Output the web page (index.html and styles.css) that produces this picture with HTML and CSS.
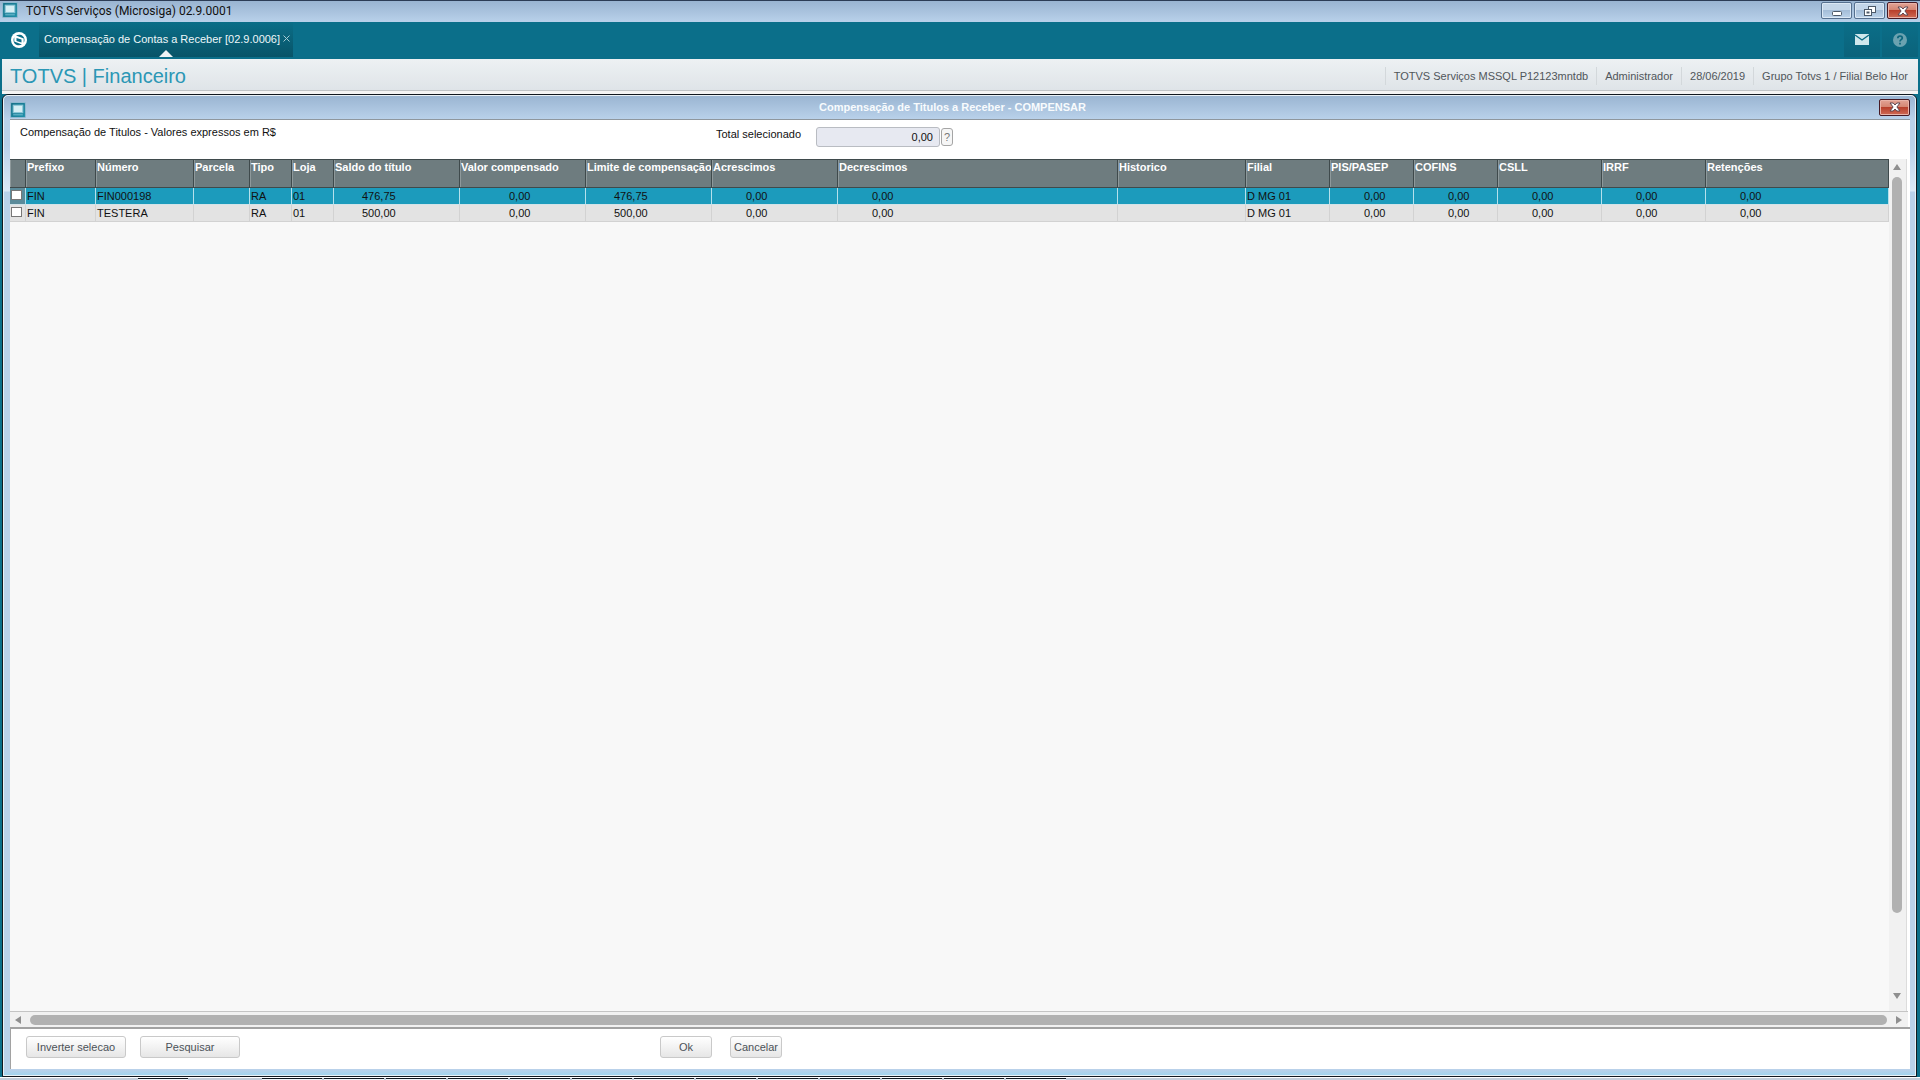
FILE: index.html
```html
<!doctype html>
<html lang="pt-BR">
  <head>
    <meta charset="UTF-8" />
    <meta name="viewport" content="width=device-width, initial-scale=1.0" />
    <title>TOTVS Serviços (Microsiga) 02.9.0001</title>
    <link rel="stylesheet" href="styles.css">
  </head>
  <body>
    <svg class="sprite" width="0" height="0">
      <defs>
        <linearGradient id="app-bg" x1="0" y1="0" x2="1" y2="1">
          <stop offset="0" stop-color="#166f88" />
          <stop offset="1" stop-color="#1f91aa" />
        </linearGradient>
        <symbol id="app" viewBox="0 0 15 15">
          <rect x="0.5" y="0.5" width="14" height="14" rx="1" fill="url(#app-bg)" stroke="#8fb9cf" />
          <rect x="3" y="3" width="9" height="7" fill="#d5eef4" stroke="#8ac6d6" />
          <path d="M3 12h9" stroke="#6fbccf" />
        </symbol>
        <symbol id="close" viewBox="0 0 12 10">
          <path d="M1 1h3.200L6 3l1.800-2H11L7.900 5 11 9H7.800L6 7 4.200 9H1l3.100-4z" fill="#fff" stroke="#5d4650" />
        </symbol>
      </defs>
    </svg>

    <header class="titlebar">
      <svg class="app-icon"><use href="#app" /></svg>
      <span class="titlebar-text">TOTVS Serviços (Microsiga) 02.9.0001</span>
      <div class="window-buttons">
        <button class="win" aria-label="Minimizar">
          <svg width="12" height="12" viewBox="0 0 12 12"><rect x="1.500" y="6.500" width="9" height="4" rx="1" fill="#fff" stroke="#4d5968" /></svg>
        </button>
        <button class="win" aria-label="Restaurar">
          <svg width="12" height="12" viewBox="0 0 12 12" fill="#fff" stroke="#4d5968">
            <rect x="4.500" y="1.500" width="7" height="6" />
            <rect x="0.500" y="4.500" width="7" height="6" />
            <rect x="3" y="7" width="2" height="1" />
          </svg>
        </button>
        <button class="win win-close" aria-label="Fechar"><svg width="12" height="10"><use href="#close" /></svg></button>
      </div>
    </header>

    <div class="frame">
      <nav class="tabs">
        <button class="logo" aria-label="Menu">
          <svg width="16" height="16" viewBox="0 0 16 16">
            <circle cx="8" cy="8" r="8" fill="#fff" />
            <path d="M5.500 6l5 1.500v3l-5-1.500z" fill="#0b6e88" />
            <path d="M5 3.500c4-2 8.500 0 8.500 4.500 0 1.200-.3 2-.8 2.800V6.500zM11 12.500c-4 2-8.500 0-8.500-4.500 0-1.200.3-2 .8-2.800v4.300z" fill="#0b6e88" />
          </svg>
        </button>
        <div class="tab">
          <a href="#">Compensação de Contas a Receber [02.9.0006]</a>
          <button class="tab-close" aria-label="Fechar aba">
            <svg width="7" height="7" viewBox="0 0 7 7"><path d="M.5.5l6 6M6.500.5l-6 6" stroke="#a5cbd3" /></svg>
          </button>
        </div>
        <div class="tools">
          <button class="tool" aria-label="Mensagens">
            <svg width="14" height="11" viewBox="0 0 14 11"><path d="M0 0h14v11H0z" fill="#cfe7ec" /><path d="M0 1l7 5 7-5" fill="none" stroke="#0a6b84" stroke-width="1.400" /></svg>
          </button>
          <button class="tool" aria-label="Ajuda">
            <svg width="14" height="14" viewBox="0 0 14 14"><circle cx="7" cy="7" r="7" fill="#6ba2b0" /><path d="M4.800 5.300c0-3 4.500-3 4.500-.3C9.300 6.700 7 6.600 7 8.500M7 9.700v1.800" fill="none" stroke="#0b657c" stroke-width="1.700" /></svg>
          </button>
        </div>
      </nav>

      <div class="module">
        <h1>TOTVS | Financeiro</h1>
        <ul class="session">
          <li>TOTVS Serviços MSSQL P12123mntdb</li>
          <li>Administrador</li>
          <li>28/06/2019</li>
          <li>Grupo Totvs 1 / Filial Belo Hor</li>
        </ul>
      </div>

      <main class="dialog">
        <div class="dialog-title">
          <svg class="app-icon"><use href="#app" /></svg>
          <h2>Compensação de Titulos a Receber - COMPENSAR</h2>
          <button class="win win-close" aria-label="Fechar janela"><svg width="12" height="10"><use href="#close" /></svg></button>
        </div>

        <div class="content">
          <div class="summary">
            <p>Compensação de Titulos - Valores expressos em R$</p>
            <label for="total">Total selecionado</label>
            <input id="total" class="total" type="text" value="0,00" readonly>
            <button class="help">?</button>
          </div>

          <div class="grid">
            <div class="grid-view">
              <table>
                <colgroup>
                  <col class="c-check"><col class="c-prefix"><col class="c-number"><col class="c-parcel">
                  <col class="c-short"><col class="c-short">
                  <col class="c-value"><col class="c-value"><col class="c-value"><col class="c-value">
                  <col class="c-dec"><col class="c-hist">
                  <col class="c-tax"><col class="c-tax"><col class="c-tax">
                  <col class="c-wide"><col class="c-wide"><col>
                </colgroup>
                <thead>
                  <tr>
                    <th></th>
                    <th>Prefixo</th>
                    <th>Número</th>
                    <th>Parcela</th>
                    <th>Tipo</th>
                    <th>Loja</th>
                    <th>Saldo do título</th>
                    <th>Valor compensado</th>
                    <th>Limite de compensação</th>
                    <th>Acrescimos</th>
                    <th>Decrescimos</th>
                    <th>Historico</th>
                    <th>Filial</th>
                    <th>PIS/PASEP</th>
                    <th>COFINS</th>
                    <th>CSLL</th>
                    <th>IRRF</th>
                    <th>Retenções</th>
                  </tr>
                </thead>
                <tbody>
                  <tr class="selected">
                    <td class="check"><input type="checkbox" aria-label="FIN000198"></td>
                    <td>FIN</td>
                    <td>FIN000198</td>
                    <td></td>
                    <td>RA</td>
                    <td>01</td>
                    <td class="amount">476,75</td>
                    <td class="comp">0,00</td>
                    <td class="amount">476,75</td>
                    <td class="zero">0,00</td>
                    <td class="zero">0,00</td>
                    <td></td>
                    <td>D MG 01</td>
                    <td class="zero">0,00</td>
                    <td class="zero">0,00</td>
                    <td class="zero">0,00</td>
                    <td class="zero">0,00</td>
                    <td class="zero">0,00</td>
                  </tr>
                  <tr>
                    <td class="check"><input type="checkbox" aria-label="TESTERA"></td>
                    <td>FIN</td>
                    <td>TESTERA</td>
                    <td></td>
                    <td>RA</td>
                    <td>01</td>
                    <td class="amount">500,00</td>
                    <td class="comp">0,00</td>
                    <td class="amount">500,00</td>
                    <td class="zero">0,00</td>
                    <td class="zero">0,00</td>
                    <td></td>
                    <td>D MG 01</td>
                    <td class="zero">0,00</td>
                    <td class="zero">0,00</td>
                    <td class="zero">0,00</td>
                    <td class="zero">0,00</td>
                    <td class="zero">0,00</td>
                  </tr>
                </tbody>
              </table>
            </div>
            <div class="vscroll">
              <svg width="8" height="6" viewBox="0 0 8 6"><path d="M4 0l4 6H0z" /></svg>
              <div class="track"><div class="thumb"></div></div>
              <svg width="8" height="6" viewBox="0 0 8 6"><path d="M4 6l4-6H0z" /></svg>
            </div>
          </div>

          <div class="hscroll">
            <svg width="6" height="8" viewBox="0 0 6 8"><path d="M0 4l6-4v8z" /></svg>
            <div class="thumb"></div>
            <svg width="6" height="8" viewBox="0 0 6 8"><path d="M6 4L0 0v8z" /></svg>
          </div>

          <div class="actions">
            <div class="group">
              <button class="btn wide">Inverter selecao</button>
              <button class="btn wide">Pesquisar</button>
            </div>
            <div class="group confirm">
              <button class="btn">Ok</button>
              <button class="btn">Cancelar</button>
            </div>
          </div>
        </div>
      </main>
    </div>

    <footer class="shelf">
      <i class="first"></i>
      <i></i><i></i><i></i><i></i><i></i><i></i><i></i><i></i><i></i><i></i><i></i><i></i><i></i>
    </footer>
  </body>
</html>
```
FILE: styles.css
```css
* {
  box-sizing: border-box;
}
body {
  margin: 0;
  height: 100vh;
  display: flex;
  flex-direction: column;
  overflow: hidden;
  background: #0b6f8a;
  color: #111;
  font: 11px/14px "Liberation Sans", Arial, sans-serif;
}
button, input {
  font: inherit;
  color: inherit;
  margin: 0;
  padding: 0;
}
button {
  display: flex;
  align-items: center;
  justify-content: center;
  border: 0;
  background: none;
}
h1, h2, p, ul {
  margin: 0;
  padding: 0;
  font-weight: normal;
}
.sprite {
  position: absolute;
}

/* window */
.titlebar {
  flex: none;
  display: flex;
  align-items: flex-start;
  height: 22px;
  padding: 1px 2px 0;
  border-top: 1px solid #2c3c55;
  background: linear-gradient(#99b4d1, #b9d1ea);
}
.app-icon {
  flex: none;
  width: 16px;
  height: 16px;
}
.titlebar-text {
  flex: 1;
  margin-left: 8px;
  font: 12px/18px Roboto, sans-serif;
}
.window-buttons {
  display: flex;
  gap: 2px;
}
.win {
  flex: none;
  width: 31px;
  height: 17px;
  border: 1px solid #56708f;
  border-radius: 2px;
  background: linear-gradient(#c4d6e9 45%, #a4bdd8 50%, #bcd3ea);
  box-shadow: inset 0 0 0 1px #dbe8f5;
}
.win-close {
  border-color: #471a24;
  background: linear-gradient(#e3a496, #d58673 45%, #b8402c 50%, #cf6b55);
  box-shadow: inset 0 0 0 1px #e9b3a8;
}
.frame {
  flex: 1;
  min-height: 0;
  display: flex;
  flex-direction: column;
  padding: 0 2px;
}

/* tabs */
.tabs {
  flex: none;
  display: flex;
  height: 37px;
  padding-bottom: 2px;
}
.logo {
  width: 34px;
  margin-right: 3px;
}
.tab {
  position: relative;
  display: flex;
  align-items: center;
  gap: 3px;
  padding: 0 3px 2px 5px;
  background: linear-gradient(#0b6e88, #085468);
}
.tab::after {
  content: "";
  position: absolute;
  left: 50%;
  bottom: 0;
  margin-left: -7px;
  border: 7px solid transparent;
  border-top: 0;
  border-bottom-color: #edf3f5;
}
.tab a {
  color: #eef8fa;
  text-decoration: none;
}
.tools {
  display: flex;
  gap: 2px;
  margin-left: auto;
}
.tool {
  width: 36px;
  background: linear-gradient(#0b6e88, #0b637b);
}

/* module bar */
.module {
  flex: none;
  display: flex;
  align-items: center;
  justify-content: space-between;
  height: 35px;
  padding: 0 10px 2px 8px;
  background: linear-gradient(#edf1f3, #dfe4e8 31px, #bfc3c6 31px, #bfc3c6 32px, #f4f4f4 32px);
}
.module h1 {
  color: #2b97b5;
  font-size: 20px;
  line-height: 24px;
}
.session {
  display: flex;
  list-style: none;
  color: #50565a;
}
.session li {
  padding: 2px 8px;
  border-left: 1px solid #d3d8db;
}
.session li:last-child {
  padding-right: 0;
}

/* dialog */
.dialog {
  flex: 1;
  min-height: 0;
  display: flex;
  flex-direction: column;
  margin-right: 1px;
  padding: 0 6px 7px 7px;
  border: 1px solid #111820;
  border-radius: 6px 6px 0 0;
  outline: 1px solid #e9f1f6;
  outline-offset: -2px;
  background: linear-gradient(#99b4d1, #b9d1ea 24px, #b9d1ea 50px, #dce9f7 96px, #b9d1ea 97px, #b9d1ea calc(100% - 6px), #9dd4ee);
}
.dialog-title {
  flex: none;
  display: flex;
  align-items: center;
  height: 24px;
}
.dialog-title .app-icon {
  margin-top: 6px;
}
.dialog-title h2 {
  flex: 1;
  color: #f8fbfd;
  font-size: 11px;
  font-weight: bold;
  text-align: center;
}
.content {
  flex: 1;
  min-height: 0;
  display: flex;
  flex-direction: column;
  border-top: 1px solid #8f979e;
  background: #fff;
}
.summary {
  flex: none;
  display: flex;
  height: 39px;
  padding: 5px 10px;
}
.summary p {
  width: 696px;
}
.summary label {
  width: 100px;
  padding-top: 2px;
}
.total {
  width: 124px;
  height: 20px;
  margin-top: 2px;
  padding: 0 6px;
  border: 1px solid #b9bcc2;
  border-radius: 3px;
  background: #e7e9f1;
  text-align: right;
}
.help {
  width: 12px;
  height: 18px;
  margin: 3px 1px;
  border: 1px solid #a5a5a5;
  border-radius: 3px;
  background: #f6f6f6;
  color: #777;
}

/* grid */
.grid {
  flex: 1;
  min-height: 0;
  display: flex;
  margin-right: 3px;
}
.grid-view {
  flex: 1;
  overflow: hidden;
  background: #f8f8f8;
}
table {
  width: 100%;
  table-layout: fixed;
  border-collapse: separate;
  border-spacing: 0;
}
.c-check { width: 16px; }
.c-prefix { width: 70px; }
.c-number { width: 98px; }
.c-parcel { width: 56px; }
.c-short { width: 42px; }
.c-value { width: 126px; }
.c-dec { width: 280px; }
.c-hist { width: 128px; }
.c-tax { width: 84px; }
.c-wide { width: 104px; }
th {
  height: 29px;
  padding: 0 0 0 1px;
  border: solid #3f4a4c;
  border-width: 1px 1px 1px 0;
  box-shadow: inset 1px 0 #8e999b;
  background: #6e7c7f;
  color: #fff;
  font-size: 11px;
  text-align: left;
  vertical-align: top;
  white-space: nowrap;
  overflow: hidden;
}
td {
  height: 17px;
  padding: 0 0 0 1px;
  border: solid #d2d2d2;
  border-width: 0 1px 1px 0;
  background: #e3e3e3;
  line-height: 16px;
  white-space: nowrap;
}
.selected td {
  border-color: #b5e0ec;
  border-bottom-color: #d2e3e8;
  background: #1c9bbc;
}
td.check {
  padding: 0;
}
.selected .check {
  background: #5b8b9a;
}
.check input {
  display: block;
  appearance: none;
  width: 11px;
  height: 10px;
  margin: 0 1px 2px;
  border: 1px solid #777;
  background: #fff;
}
td.amount { padding-left: 28px; }
td.comp { padding-left: 49px; }
td.zero { padding-left: 34px; }

/* scrollbars */
.vscroll {
  width: 18px;
  display: flex;
  flex-direction: column;
  align-items: center;
  padding: 5px 1px 12px 0;
  border-right: 1px solid #dcdcdc;
  background: #f1f1f1;
}
.vscroll svg, .hscroll svg {
  flex: none;
  fill: #8f8f8f;
}
.track {
  flex: 1;
  width: 10px;
  padding: 7px 0;
}
.thumb {
  border-radius: 5px;
  background: #b1b1b1;
}
.track .thumb {
  height: 91%;
}
.hscroll {
  flex: none;
  display: flex;
  align-items: center;
  gap: 9px;
  height: 16px;
  margin-right: 2px;
  padding: 0 6px 0 5px;
  border-top: 1px solid #c4c4c4;
  background: #f1f1f1;
}
.hscroll .thumb {
  flex: 1;
  height: 10px;
}

.actions {
  flex: none;
  display: flex;
  align-items: flex-start;
  height: 42px;
  padding: 7px 15px 0;
  border-top: 2px solid #a2a2a2;
  border-left: 1px solid #a2a2a2;
}
.group {
  display: flex;
  gap: 14px;
  width: 634px;
}
.confirm {
  gap: 18px;
}
.btn {
  width: 52px;
  height: 22px;
  border: 1px solid #c9c9c9;
  border-radius: 3px;
  background: linear-gradient(#fff, #e6e6e6);
  color: #4c5258;
}
.wide {
  width: 100px;
}

/* top edge of the buttons under the dialog */
.shelf {
  flex: none;
  display: flex;
  gap: 2px;
  height: 3px;
  padding-left: 138px;
  border-top: 1px solid #fff;
  background: #c3ccd8;
}
.shelf i {
  width: 60px;
  border-top: 1px solid #111820;
  background: #eef1f5;
}
.shelf .first {
  width: 50px;
  margin-right: 72px;
}
```
